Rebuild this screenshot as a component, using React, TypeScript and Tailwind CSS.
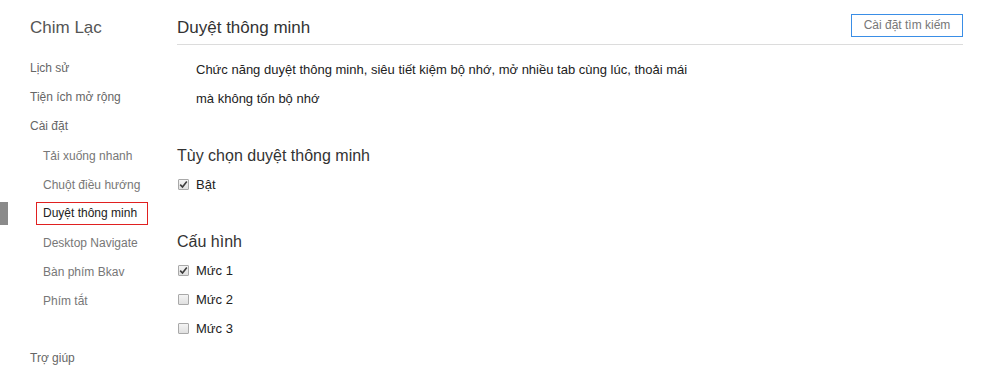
import React from "react";

function Check({ checked }: { checked: boolean }) {
  return (
    <span className="inline-flex w-[11px] h-[11px] border border-[#a9a9a9] bg-gradient-to-b from-[#f4f4f4] to-[#e0e0e0] items-center justify-center mr-[7px] rounded-[1px]">
      {checked && (
        <svg width="9" height="9" viewBox="0 0 9 9">
          <path d="M1.2 4.6 L3.5 7 L7.8 1.6" fill="none" stroke="#3c3c3c" strokeWidth="1.6" />
        </svg>
      )}
    </span>
  );
}

function Option({ label, checked }: { label: string; checked: boolean }) {
  return (
    <div className="flex items-center h-[29px] pl-[1px] text-[13px] text-[#222]">
      <Check checked={checked} />
      <span>{label}</span>
    </div>
  );
}

export default function App() {
  const top = ["Lịch sử", "Tiện ích mở rộng", "Cài đặt"];
  const subs = [
    "Tải xuống nhanh",
    "Chuột điều hướng",
    "Duyệt thông minh",
    "Desktop Navigate",
    "Bàn phím Bkav",
    "Phím tắt",
  ];
  return (
    <div
      className="flex w-[995px] h-[389px] bg-white overflow-hidden"
      style={{ fontFamily: '"Liberation Sans", Arial, sans-serif' }}
    >
      <aside className="w-[177px] shrink-0 flex flex-col">
        <div className="h-[54px] pt-[12px] pl-[30px] text-[17px] text-[#555] leading-[32px]">Chim Lạc</div>
        {top.map((t) => (
          <div key={t} className="h-[29px] leading-[29px] pl-[30px] text-[12px] text-[#666]">
            {t}
          </div>
        ))}
        {subs.map((s) => {
          const sel = s === "Duyệt thông minh";
          return (
            <div key={s} className="flex items-center h-[29px]">
              <div className={`w-[8px] h-[23px] ${sel ? "bg-[#8a8a8a]" : ""}`} />
              {sel ? (
                <div className="ml-[28px] w-[112px] h-[23px] border border-[#e02020] pl-[6px] text-[12px] leading-[21px] text-[#222]">
                  {s}
                </div>
              ) : (
                <div className="ml-[35px] text-[12px] text-[#777]">{s}</div>
              )}
            </div>
          );
        })}
        <div className="h-[29px]" />
        <div className="h-[29px] leading-[29px] pl-[30px] text-[12px] text-[#666]">Trợ giúp</div>
      </aside>
      <main className="flex-1 pr-[32px] pt-[12px]">
        <div className="flex items-center justify-between h-[33px] border-b border-[#dcdcdc]">
          <h1 className="text-[17px] text-[#333] leading-[32px] -mt-[1px]">Duyệt thông minh</h1>
          <button className="h-[23px] w-[112px] border border-[#3a8ee6] text-[12px] text-[#777] bg-white -mt-[6px]">
            Cài đặt tìm kiếm
          </button>
        </div>
        <div className="mt-[10px] pl-[19px] text-[13px] text-[#222] leading-[29px]">
          <p>Chức năng duyệt thông minh, siêu tiết kiệm bộ nhớ, mở nhiều tab cùng lúc, thoải mái</p>
          <p>mà không tốn bộ nhớ</p>
        </div>
        <h2 className="mt-[28px] h-[29px] leading-[29px] text-[16px] text-[#333]">Tùy chọn duyệt thông minh</h2>
        <Option label="Bật" checked />
        <h2 className="mt-[28px] h-[29px] leading-[29px] text-[16px] text-[#333]">Cấu hình</h2>
        <Option label="Mức 1" checked />
        <Option label="Mức 2" checked={false} />
        <Option label="Mức 3" checked={false} />
      </main>
    </div>
  );
}
